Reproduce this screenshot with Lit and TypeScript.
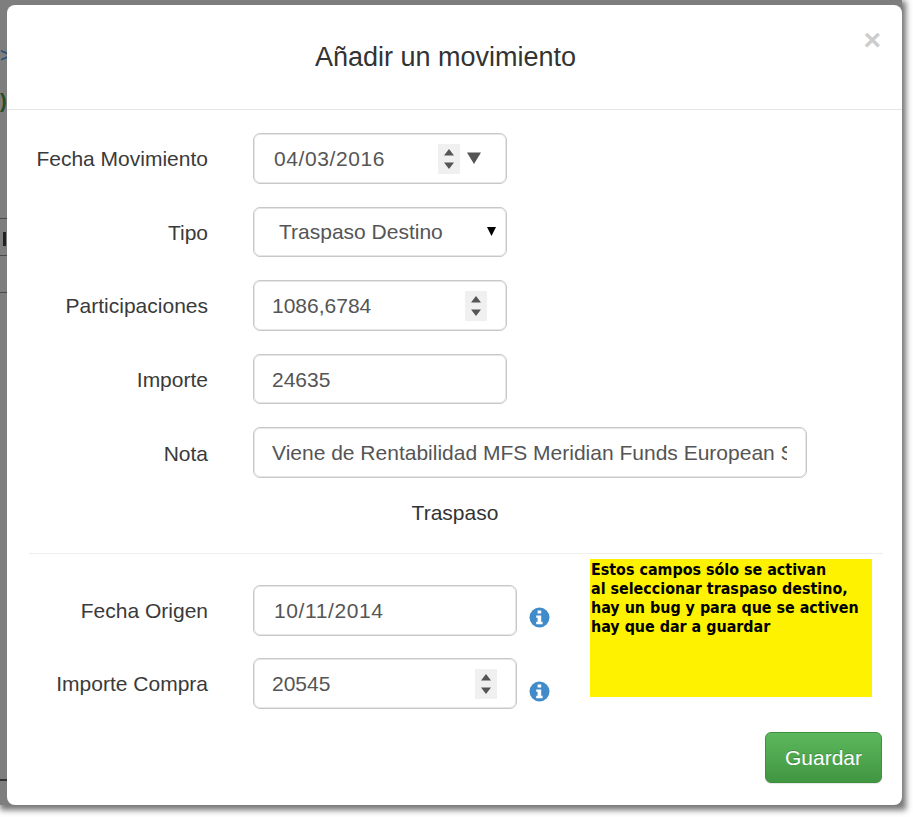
import { LitElement, html, css } from "lit";
import { customElement } from "lit/decorators.js";

const spin = html`<span class="spin"><svg width="12" height="24" viewBox="0 0 12 24"><path d="M6 2 L11 8.5 H1 Z M1 15.5 H11 L6 22 Z" fill="#555"/></svg></span>`;
const info = html`<svg class="info" width="21" height="21" viewBox="0 0 21 21"><circle cx="10.5" cy="10.5" r="10" fill="#428bca"/><path d="M8.6 3.6h3.6v3H8.6z M7.2 8.4h5v6.4h1.4v2.4H7.2v-2.4h1.4v-4H7.2z" fill="#fff"/></svg>`;

@customElement("app-root")
export class AppRoot extends LitElement {
  static styles = css`
    :host { display: block; width: 913px; height: 817px; background: #fff; overflow: hidden; font-family: "Liberation Sans", Arial, sans-serif; color: #333; }
    .backdrop { position: relative; box-sizing: border-box; width: 902px; height: 805px; background: #7e7e7e; padding: 5px 0 0 7px; box-shadow: 2px 3px 6px 2px rgba(0,0,0,.55); }
    .mark { position: absolute; left: 0; width: 7px; height: 1px; background: #4a4a4a; }
    .glyph { position: absolute; left: 0; font-size: 20px; line-height: 20px; }
    .modal { box-sizing: border-box; width: 895px; height: 800px; background: #fff; border-radius: 8px; display: flex; flex-direction: column; position: relative; }
    .header { height: 105px; flex: none; box-sizing: border-box; border-bottom: 1px solid #e5e5e5; display: flex; align-items: center; justify-content: center; padding: 0 18px 0 0; }
    h4 { margin: 0; font-size: 27px; font-weight: 400; line-height: 36px; }
    .close { position: absolute; right: 21px; top: 18px; font-size: 30px; font-weight: 700; line-height: 34px; color: #ccc; }
    .body { padding: 23px 0 0; flex: 1; }
    .row { display: flex; align-items: center; height: 50.6px; margin-bottom: 23px; }
    label { width: 201px; text-align: right; font-size: 21px; margin-right: 45px; flex: none; padding-top: 2px; color: #3a3a3a; }
    .ctl { box-sizing: border-box; width: 254px; height: 100%; border: 1px solid #c8c8c8; box-shadow: inset 0 0 0 1px #e6e6e6; border-radius: 7px; display: flex; align-items: center; padding: 1px 0 0 18px; font-size: 21px; color: #555; position: relative; background: #fff; }
    .ctl span.v { white-space: nowrap; overflow: hidden; }
    .wide { width: 554px; padding-right: 19px; }
    .mid { width: 264px; }
    .spin { position: absolute; top: 10px; width: 22px; height: 30px; background: #f0f0f0; display: flex; align-items: center; justify-content: center; }
    .date .spin { left: 184px; }
    .part .spin { left: 211px; }
    .compra .spin { left: 221px; }
    .drop { position: absolute; left: 213px; top: 18px; }
    .sel { position: absolute; left: 233px; top: 19px; }
    .date .v, .fo .v { padding-left: 2px; letter-spacing: 0.6px; }
    .sel-v { padding-left: 7px; }
    .traspaso { text-align: center; font-size: 21px; height: 23px; line-height: 23px; margin: 0 0 0 1px; }
    hr { border: 0; border-top: 1px solid #eee; margin: 29px 19px 31px 22px; height: 0; }
    .lower { position: relative; }
    .lower .row { margin-bottom: 22.4px; }
    .info { margin-left: 12px; align-self: flex-end; margin-bottom: 8px; flex: none; }
    .lower .row + .row .info { margin-bottom: 7px; }
    .note { position: absolute; left: 583px; top: -26px; width: 282px; height: 138px; background: #fff200; color: #000; font: 700 15.9px/19px "DejaVu Sans", sans-serif; font-stretch: condensed; padding: 1px; box-sizing: border-box; white-space: pre; }
    .btn { position: absolute; left: 758px; top: 727px; box-sizing: border-box; width: 117px; height: 51px; border: 1px solid #3e8f3e; border-radius: 6px; background: linear-gradient(#5cb85c, #419641); color: #fff; font: 400 21px "Liberation Sans", Arial, sans-serif; display: flex; align-items: center; justify-content: center; box-shadow: 0 1px 1px rgba(0,0,0,.1); text-shadow: 0 -1px 0 rgba(0,0,0,.2); }
  `;

  render() {
    return html`
      <div class="backdrop">
        <span class="glyph" style="top:45px;color:#1f4e79">&gt;</span>
        <span class="glyph" style="top:91px;color:#234d23;font-weight:700">)</span>
        <span class="mark" style="top:218px"></span>
        <span class="mark" style="top:232px;left:3px;width:3px;height:14px;background:#222"></span>
        <span class="mark" style="top:255px"></span>
        <span class="mark" style="top:292px"></span>
        <span class="mark" style="top:779px;height:2px;background:#333"></span>
        <div class="modal">
          <div class="header"><h4>Añadir un movimiento</h4></div>
          <span class="close">×</span>
          <div class="body">
            <div class="row"><label>Fecha Movimiento</label><div class="ctl date"><span class="v">04/03/2016</span>${spin}
              <svg class="drop" width="14" height="12" viewBox="0 0 14 12"><path d="M0 0.5H14L7 12Z" fill="#555"/></svg></div></div>
            <div class="row"><label>Tipo</label><div class="ctl"><span class="v sel-v">Traspaso Destino</span>
              <svg class="sel" width="9" height="9" viewBox="0 0 9 9"><path d="M0 0H9L4.5 9Z" fill="#000"/></svg></div></div>
            <div class="row"><label>Participaciones</label><div class="ctl part"><span class="v">1086,6784</span>${spin}</div></div>
            <div class="row"><label>Importe</label><div class="ctl"><span class="v">24635</span></div></div>
            <div class="row"><label>Nota</label><div class="ctl wide"><span class="v">Viene de Rentabilidad MFS Meridian Funds European Smaller Companies</span></div></div>
            <div class="traspaso">Traspaso</div>
            <hr />
            <div class="lower">
              <div class="note">Estos campos sólo se activan
al seleccionar traspaso destino,
hay un bug y para que se activen
hay que dar a guardar</div>
              <div class="row"><label>Fecha Origen</label><div class="ctl mid fo"><span class="v">10/11/2014</span></div>${info}</div>
              <div class="row"><label>Importe Compra</label><div class="ctl mid compra"><span class="v">20545</span>${spin}</div>${info}</div>
            </div>
          </div>
          <div class="btn">Guardar</div>
        </div>
      </div>
    `;
  }
}
